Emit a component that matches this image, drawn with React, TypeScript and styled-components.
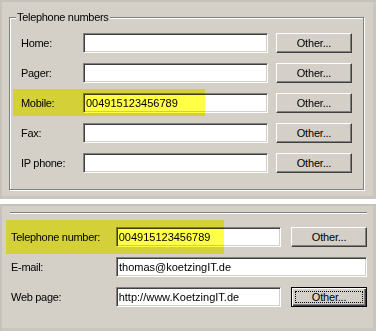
import React from "react";
import styled, { createGlobalStyle } from "styled-components";

const Global = createGlobalStyle`
  html, body { margin: 0; padding: 0; background: #ffffff; }
  body {
    font-family: "Liberation Sans", Arial, sans-serif;
    font-size: 11px;
    color: #000;
  }
`;

const Page = styled.div`
  width: 376px;
  height: 331px;
  display: flex;
  flex-direction: column;
  gap: 5px;
  background: #ffffff;
  overflow: hidden;
`;

const Panel = styled.section<{ $h: number; $pad: string }>`
  position: relative;
  box-sizing: border-box;
  height: ${(p) => p.$h}px;
  padding: ${(p) => p.$pad};
  background: #d4d0c8;
  box-shadow: inset 2px 2px 0 #c5c2bb, inset -3px -3px 0 #c9c6c0;
`;

const GroupBox = styled.fieldset`
  box-sizing: border-box;
  width: 355px;
  height: 179px;
  margin: 0;
  padding: 9px 11px 16px 11px;
  min-width: 0;
  border: 1px solid #808080;
  box-shadow: inset 1px 1px 0 #ffffff, 1px 1px 0 #ffffff;
`;

const Legend = styled.legend`
  margin-left: -5px;
  padding: 0 1px;
  line-height: 13px;
  background: #d4d0c8;
  letter-spacing: -0.3px;
`;

const Rows = styled.div<{ $mt?: number }>`
  display: flex;
  flex-direction: column;
  gap: 10px;
  margin-top: ${(p) => p.$mt ?? 0}px;
`;

const Row = styled.div`
  position: relative;
  display: flex;
  align-items: center;
  height: 20px;
`;

const Label = styled.span<{ $w: number; $pl?: number }>`
  box-sizing: border-box;
  width: ${(p) => p.$w}px;
  padding-left: ${(p) => p.$pl ?? 0}px;
  white-space: nowrap;
  letter-spacing: -0.3px;
`;

const Field = styled.input<{ $w: number }>`
  box-sizing: border-box;
  width: ${(p) => p.$w}px;
  height: 20px;
  margin: 0;
  padding: 0 0 0 2px;
  border-style: solid;
  border-width: 1px;
  border-color: #808080 #ffffff #ffffff #808080;
  box-shadow: inset 1px 1px 0 #404040, inset -1px -1px 0 #d4d0c8;
  background: #ffffff;
  color: #000;
  font: inherit;
  outline: none;
`;

const Button = styled.button<{ $ml: number; $focused?: boolean }>`
  position: relative;
  box-sizing: border-box;
  width: 76px;
  height: 20px;
  margin: 0 0 0 ${(p) => p.$ml}px;
  padding: 0;
  background: #d4d0c8;
  color: #000;
  font: inherit;
  letter-spacing: -0.2px;
  border-style: solid;
  border-width: 1px;
  border-color: ${(p) =>
    p.$focused ? "#000000" : "#ffffff #404040 #404040 #ffffff"};
  box-shadow: ${(p) =>
    p.$focused
      ? "inset 1px 1px 0 #ffffff, inset -1px -1px 0 #404040, inset -2px -2px 0 #808080"
      : "inset -1px -1px 0 #808080"};
  &::after {
    content: "";
    display: ${(p) => (p.$focused ? "block" : "none")};
    position: absolute;
    inset: 3px;
    border: 1px dotted #000;
  }
`;

const Marker = styled.span<{ $l: number; $t: number; $w: number; $h: number }>`
  position: absolute;
  left: ${(p) => p.$l}px;
  top: ${(p) => p.$t}px;
  width: ${(p) => p.$w}px;
  height: ${(p) => p.$h}px;
  background: #ffff46;
  mix-blend-mode: multiply;
  pointer-events: none;
`;

const Separator = styled.div`
  width: 357px;
  height: 0;
  border-top: 1px solid #808080;
  border-bottom: 1px solid #ffffff;
`;

const phones = [
  { label: "Home:", value: "" },
  { label: "Pager:", value: "" },
  { label: "Mobile:", value: "004915123456789", mark: true },
  { label: "Fax:", value: "" },
  { label: "IP phone:", value: "" },
];

export default function App() {
  return (
    <>
      <Global />
      <Page>
        <Panel $h={199} $pad="11px 0 0 9px">
          <GroupBox>
            <Legend>Telephone numbers</Legend>
            <Rows>
              {phones.map((p) => (
                <Row key={p.label}>
                  <Label $w={62}>{p.label}</Label>
                  <Field $w={185} value={p.value} readOnly />
                  <Button $ml={8}>Other...</Button>
                  {p.mark && <Marker $l={-8} $t={-4} $w={192} $h={27} />}
                </Row>
              ))}
            </Rows>
          </GroupBox>
        </Panel>
        <Panel $h={127} $pad="8px 9px 0 10px">
          <Separator />
          <Rows $mt={13}>
            <Row>
              <Label $w={106} $pl={1}>Telephone number:</Label>
              <Field $w={166} value="004915123456789" readOnly />
              <Button $ml={10}>Other...</Button>
              <Marker $l={-4} $t={-7} $w={218} $h={34} />
            </Row>
            <Row>
              <Label $w={106} $pl={1}>E-mail:</Label>
              <Field $w={251} value="thomas@koetzingIT.de" readOnly />
            </Row>
            <Row>
              <Label $w={106} $pl={1}>Web page:</Label>
              <Field $w={166} value="http://www.KoetzingIT.de" readOnly />
              <Button $ml={10} $focused>Other...</Button>
            </Row>
          </Rows>
        </Panel>
      </Page>
    </>
  );
}
